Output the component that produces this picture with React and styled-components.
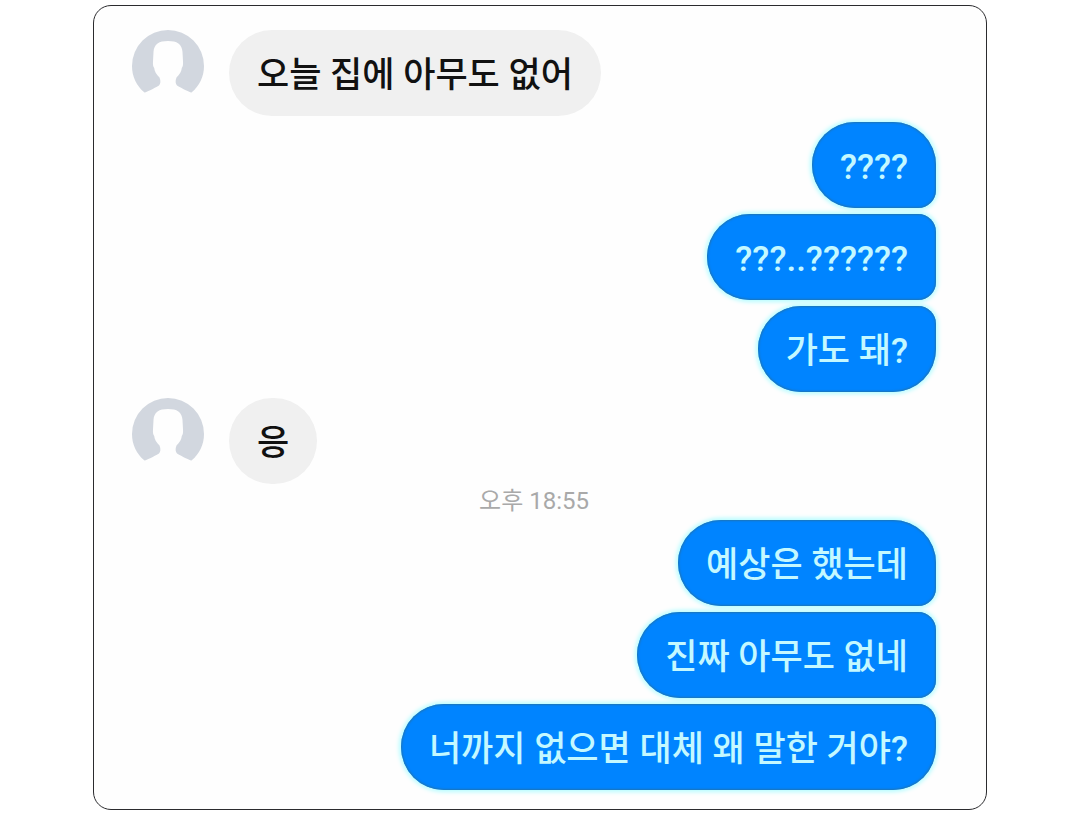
import React from "react";
import styled, { createGlobalStyle } from "styled-components";

const GlobalStyle = createGlobalStyle`
  *, *::before, *::after { box-sizing: border-box; }
  body {
    margin: 0;
    background: #ffffff;
    font-family: Roboto, "Noto Sans CJK KR", sans-serif;
  }
`;

const Page = styled.div`
  padding: 5px 93px 9px;
`;

const Chat = styled.main`
  display: flex;
  flex-direction: column;
  gap: 6px;
  padding: 24px 50px 19px 38px;
  border: 1px solid #2b2b2e;
  border-radius: 18px;
  background: #fefefe;
`;

const Row = styled.div`
  display: flex;
  align-items: flex-start;
  justify-content: ${({ $sent }) => ($sent ? "flex-end" : "flex-start")};
  gap: 25px;
`;

const Bubble = styled.p`
  margin: 0;
  padding: 21px 28px 15px;
  font-size: 35px;
  font-weight: 500;
  line-height: 50px;
`;

const Received = styled(Bubble)`
  border-radius: 43px;
  background: #f0f0f0;
  color: #111111;
`;

const corners = {
  first: "43px 43px 18px 43px",
  middle: "43px 18px 18px 43px",
  last: "43px 18px 43px 43px",
};

const Sent = styled(Bubble)`
  border-radius: ${({ $place }) => corners[$place]};
  background: #0084ff;
  color: #c4f8ff;
  box-shadow: inset 0 0 2px 1px #1f74b4, 0 0 4px 2px #b4fcff;
`;

const Time = styled.time`
  align-self: center;
  padding-bottom: 2px;
  font-size: 24px;
  line-height: 22px;
  color: #a9a9a9;
`;

const AvatarIcon = styled.svg`
  display: block;
  flex: none;
  width: 72px;
  height: 72px;
`;

function Avatar() {
  return (
    <AvatarIcon viewBox="0 0 72 72" aria-hidden="true">
      <path
        fill="#d2d7df"
        d="M12.500 62.500C4.500 56 0 46.500 0 36a36 36 0 0 1 72 0c0 10.500-4.500 20-12.500 26.500-3-.500-9-4-14.500-7-1.500-1.500-2-4.500-.500-8 3-3 5-6 5.300-9.500 1.200-1.500 1.400-4 1.200-6.500l-.500-9.500C50 14 45 11 36 11s-14 3-14.500 11l-.500 9.500c-.200 2.500 0 5 1.200 6.500.300 3.500 2.300 6.500 5.300 9.500 1.500 3.500 1 6.500-.500 8-5.500 3-11.500 6.500-14.500 7Z"
      />
    </AvatarIcon>
  );
}

const messages = [
  { text: "오늘 집에 아무도 없어" },
  { text: "????", place: "first" },
  { text: "???..??????", place: "middle" },
  { text: "가도 돼?", place: "last" },
  { text: "응" },
  { time: "오후 18:55", dateTime: "18:55" },
  { text: "예상은 했는데", place: "first" },
  { text: "진짜 아무도 없네", place: "middle" },
  { text: "너까지 없으면 대체 왜 말한 거야?", place: "last" },
];

function Message({ text, place }) {
  if (place) {
    return (
      <Row $sent>
        <Sent $place={place}>{text}</Sent>
      </Row>
    );
  }
  return (
    <Row>
      <Avatar />
      <Received>{text}</Received>
    </Row>
  );
}

export default function App() {
  return (
    <>
      <GlobalStyle />
      <Page>
        <Chat lang="ko">
          {messages.map((item, index) =>
            item.time ? (
              <Time key={index} dateTime={item.dateTime}>{item.time}</Time>
            ) : (
              <Message key={index} text={item.text} place={item.place} />
            )
          )}
        </Chat>
      </Page>
    </>
  );
}
